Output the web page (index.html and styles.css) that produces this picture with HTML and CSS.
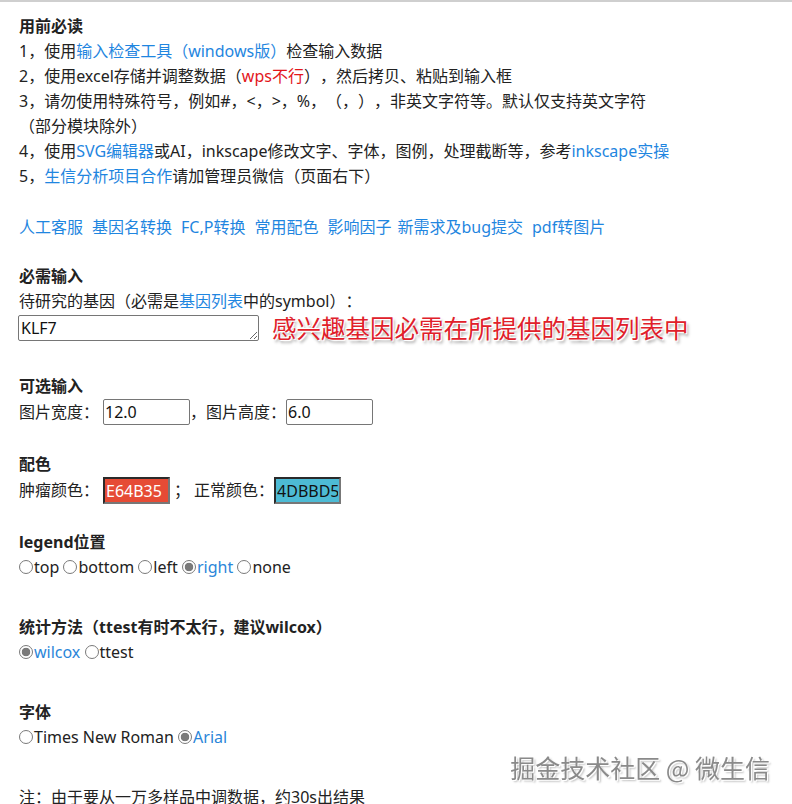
FILE: index.html
```html
<!DOCTYPE html>
<html lang="zh-CN">

<head>
    <meta charset="UTF-8">
    <meta name="viewport" content="width=device-width, initial-scale=1.0">
    <title>在线绘图</title>
    <link rel="stylesheet" href="styles.css">
</head>

<body>

    <div class="page">

        <!-- 使用说明 -->
        <div class="intro">
            <div class="title">用前必读</div>
            <div>1，使用<a href="#">输入检查工具（windows版）</a>检查输入数据</div>
            <div>2，使用excel存储并调整数据（<span class="warn">wps不行</span>），然后拷贝、粘贴到输入框</div>
            <div>3，请勿使用特殊符号，例如#，<，>，%，（，），非英文字符等。默认仅支持英文字符<br>（部分模块除外）</div>
            <div>4，使用<a href="#">SVG编辑器</a>或AI，inkscape修改文字、字体，图例，处理截断等，参考<a href="#">inkscape实操</a></div>
            <div>5，<a href="#">生信分析项目合作</a>请加管理员微信（页面右下）</div>
        </div>

        <div class="links">
            <a href="#">人工客服</a>
            <a href="#">基因名转换</a>
            <a href="#">FC,P转换</a>
            <a href="#">常用配色</a>
            <a href="#" class="tight">影响因子</a>
            <a href="#">新需求及bug提交</a>
            <a href="#">pdf转图片</a>
        </div>

        <!-- 必需输入 -->
        <div class="section first">
            <div class="title">必需输入</div>
            <div>待研究的基因（必需是<a href="#">基因列表</a>中的symbol）：</div>
            <div class="gene-row">
                <textarea class="gene-input">KLF7</textarea>
                <span class="note-red">感兴趣基因必需在所提供的基因列表中</span>
            </div>
        </div>

        <!-- 可选输入 -->
        <div class="section optional">
            <div class="title">可选输入</div>
            <div class="field-row">
                <span>图片宽度：</span>
                <input type="text" class="num-input spaced-left" value="12.0">
                <span>，图片高度：</span>
                <input type="text" class="num-input" value="6.0">
            </div>
        </div>

        <!-- 配色 -->
        <div class="section colors">
            <div class="title">配色</div>
            <div class="field-row">
                <span>肿瘤颜色：</span>
                <input type="text" class="color-input tumor spaced-left" value="E64B35">
                <span class="semi">；</span>
                <span>正常颜色：</span>
                <input type="text" class="color-input normal" value="4DBBD5">
            </div>
        </div>

        <div class="section legend">
            <div class="title">legend位置</div>
            <div class="radios">
                <label><input type="radio" name="legend">top</label>
                <label><input type="radio" name="legend">bottom</label>
                <label><input type="radio" name="legend">left</label>
                <label class="on"><input type="radio" name="legend" checked>right</label>
                <label><input type="radio" name="legend">none</label>
            </div>
        </div>

        <div class="section spaced">
            <div class="title">统计方法（ttest有时不太行，建议wilcox）</div>
            <div class="radios">
                <label class="on"><input type="radio" name="method" checked>wilcox</label>
                <label><input type="radio" name="method">ttest</label>
            </div>
        </div>

        <div class="section spaced">
            <div class="title">字体</div>
            <div class="radios">
                <label><input type="radio" name="font">Times New Roman</label>
                <label class="on"><input type="radio" name="font" checked>Arial</label>
            </div>
        </div>

        <div class="section spaced">注：由于要从一万多样品中调数据，约30s出结果</div>

    </div>

    <div class="watermark">掘金技术社区 @ 微生信</div>

</body>

</html>
```

FILE: styles.css
```css
/* Base */
body {
    margin: 0;
    padding: 0;
    font-family: "Noto Sans", "Noto Sans CJK SC", sans-serif;
    font-size: 16px;
    line-height: 25px;
    color: #222;
    background-color: #fff;
    border-top: 2px solid #cfcfcf;
    text-spacing-trim: space-all;
}

a {
    color: #1f86e0;
    text-decoration: none;
}

.page {
    padding: 12px 0 0 19px;
}

.title {
    font-weight: bold;
}

.warn {
    color: #e3161b;
}

/* Enlaces rapidos */
.links {
    margin-top: 26px;
    display: flex;
}

.links a {
    margin-right: 9px;
}

.links a.tight {
    margin-right: 6px;
}

.section.first {
    margin-top: 24px;
}

.gene-row {
    display: flex;
    align-items: center;
}

.gene-input {
    box-sizing: border-box;
    width: 241px;
    height: 26px;
    margin: 0 0 0 -1px;
    padding: 0 2px;
    border: 1px solid #767676;
    border-radius: 2px;
    font-family: "Noto Sans", sans-serif;
    font-size: 16px;
    line-height: 24px;
    color: #111;
    overflow: hidden;
}

/* Anotacion roja */
.note-red {
    margin-left: 13px;
    font-family: "Noto Sans CJK SC", sans-serif;
    font-size: 24.5px;
    line-height: 28px;
    color: #e0202a;
    text-shadow: 1px 1px 0 #fff, -1px -1px 0 #fff, 2px 3px 3px rgba(0, 0, 0, 0.35);
    white-space: nowrap;
}

.section.optional {
    margin-top: 32px;
}

.field-row {
    display: flex;
    align-items: center;
}

.spaced-left {
    margin-left: 4px !important;
}

.semi {
    margin: 0 4px 0 4px;
}

.num-input {
    box-sizing: border-box;
    width: 87px;
    height: 26px;
    margin: 0;
    padding: 0 1px;
    border: 1px solid #767676;
    border-radius: 2px;
    font-family: "Noto Sans", sans-serif;
    font-size: 16px;
    color: #111;
}

.section.colors {
    margin-top: 27px;
}

.color-input {
    box-sizing: border-box;
    width: 67px;
    height: 27px;
    margin: 0;
    padding: 0 1px;
    border-width: 2px;
    border-style: solid;
    border-color: #2a2a2a #777 #777 #2a2a2a;
    font-family: "Noto Sans", sans-serif;
    font-size: 16px;
}

.color-input.tumor {
    background-color: #e64b35;
    color: #fff;
}

.color-input.normal {
    background-color: #4dbbd5;
    color: #111;
}

.section.legend {
    margin-top: 26px;
}

.section.spaced {
    margin-top: 35px;
}

/* Radios */
.radios label.on {
    color: #2b86d9;
}

.radios input {
    appearance: none;
    -webkit-appearance: none;
    box-sizing: border-box;
    width: 14px;
    height: 14px;
    margin: 0 1px 0 0;
    border: 1px solid #7a7a7a;
    border-radius: 50%;
    vertical-align: -1px;
    background-color: #fff;
}

.radios input:checked {
    background: radial-gradient(circle, #7a7a7a 0, #7a7a7a 4px, #fff 4.6px);
}

/* Marca de agua */
.watermark {
    position: fixed;
    right: 22px;
    top: 752px;
    font-family: "Noto Sans CJK SC", sans-serif;
    font-size: 25px;
    line-height: 30px;
    color: #8a8a8a;
    text-shadow: 1px 1px 0 #fff, 2px 2px 2px rgba(0, 0, 0, 0.25);
}
```
